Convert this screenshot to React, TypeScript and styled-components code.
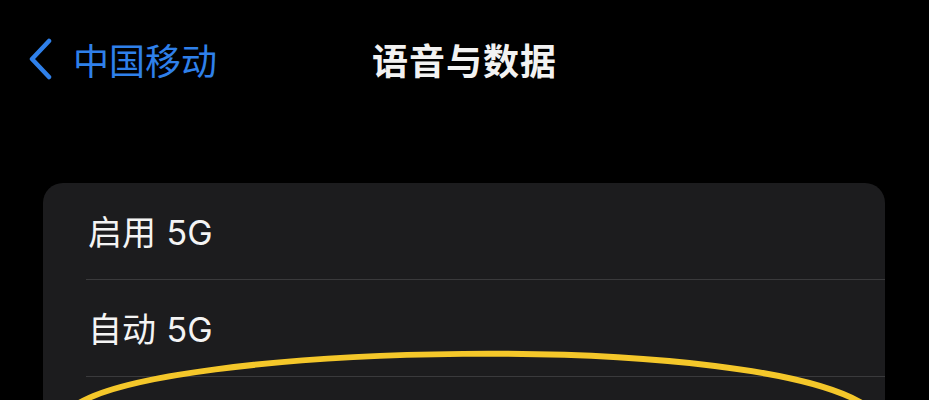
import styled, { createGlobalStyle } from "styled-components";

const GlobalStyle = createGlobalStyle`
  html, body {
    margin: 0;
    padding: 0;
    background: #000;
    overflow: hidden;
  }
  body {
    font-family: "Noto Sans CJK SC", "Noto Sans", sans-serif;
    -webkit-font-smoothing: antialiased;
  }
`;

const Screen = styled.div`
  position: relative;
  width: 929px;
  height: 400px;
  background: #000;
  overflow: hidden;
`;

const NavBar = styled.div`
  display: grid;
  grid-template-columns: 1fr auto 1fr;
  align-items: center;
  height: 118px;
`;

const BackButton = styled.div`
  display: flex;
  align-items: center;
  gap: 20px;
  padding-left: 27px;
  color: #2f80ea;
  font-size: 36px;
  font-weight: 400;
  line-height: 1;
`;

const Title = styled.div`
  color: #f2f2f2;
  font-size: 36px;
  font-weight: 600;
  line-height: 1;
  letter-spacing: 1px;
`;

const Card = styled.div`
  margin: 65px 44px 0 43px;
  background: #1c1c1e;
  border-radius: 20px;
  height: 260px;
  overflow: hidden;
`;

const Row = styled.div<{ $divider?: boolean }>`
  display: flex;
  align-items: center;
  height: 97px;
  margin-left: 43px;
  box-sizing: border-box;
  border-bottom: ${(p) => (p.$divider ? "1px solid #3a3a3c" : "none")};
`;

const RowLabel = styled.span`
  padding-left: 2px;
  margin-top: 3px;
  color: #f4f4f4;
  font-family: Inter, "Noto Sans CJK SC", sans-serif;
  font-size: 34px;
  line-height: 1;
  word-spacing: 1px;
`;

const Annotation = styled.svg`
  position: absolute;
  left: 0;
  top: 0;
  pointer-events: none;
`;

const Chevron = () => (
  <svg width="26" height="42" viewBox="0 0 26 42">
    <path
      d="M22 3 L5 21 L22 39"
      fill="none"
      stroke="#2f80ea"
      strokeWidth="4.5"
      strokeLinecap="round"
      strokeLinejoin="round"
    />
  </svg>
);

export default function App() {
  return (
    <>
      <GlobalStyle />
      <Screen>
        <NavBar>
          <BackButton>
            <Chevron />
            <span>中国移动</span>
          </BackButton>
          <Title>语音与数据</Title>
          <div />
        </NavBar>
        <Card>
          <Row $divider>
            <RowLabel>启用 5G</RowLabel>
          </Row>
          <Row $divider>
            <RowLabel>自动 5G</RowLabel>
          </Row>
          <Row />
        </Card>
        <Annotation width="929" height="400" viewBox="0 0 929 400">
          <path
            d="M72 408 C 150 343, 770 328, 872 410"
            fill="none"
            stroke="#f4c72a"
            strokeWidth="6"
            strokeLinecap="round"
          />
        </Annotation>
      </Screen>
    </>
  );
}
